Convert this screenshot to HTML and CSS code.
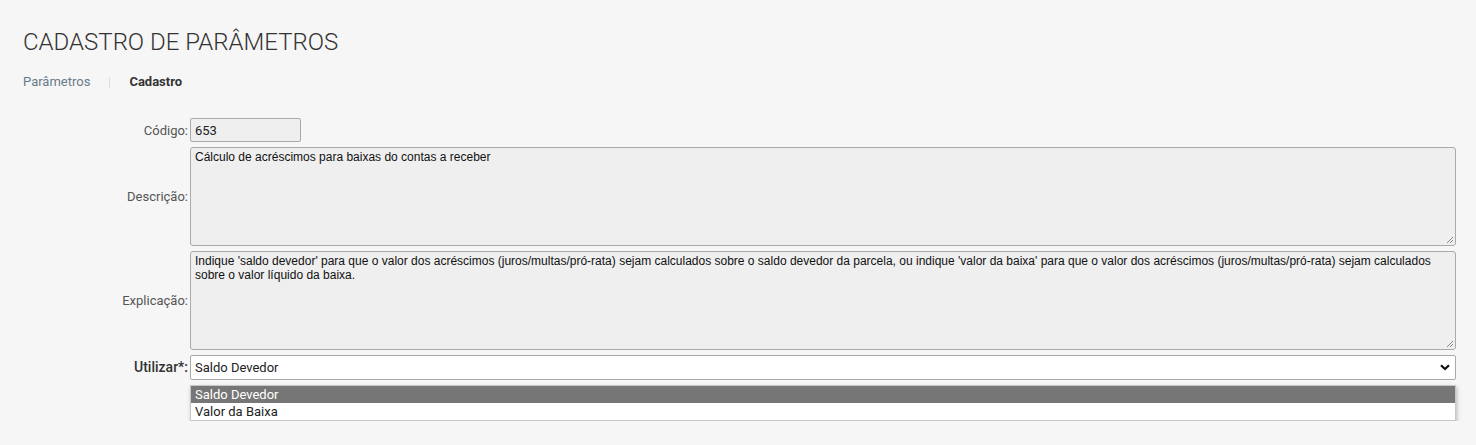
FILE: index.html
```html
<!DOCTYPE html>
<html lang="pt-BR">
<head>
<meta charset="utf-8">
<title>Cadastro de Parâmetros</title>
<link rel="stylesheet" href="styles.css">
</head>
<body>
<div class="page">
  <h1 class="title">CADASTRO DE PARÂMETROS</h1>
  <nav class="crumbs">
    <span class="crumb-link">Parâmetros</span>
    <span class="crumb-sep"></span>
    <span class="crumb-current">Cadastro</span>
  </nav>
  <div class="form">
    <div class="row">
      <span class="label">Código:</span>
      <div class="input code">653</div>
    </div>
    <div class="row">
      <span class="label">Descrição:</span>
      <div class="area">Cálculo de acréscimos para baixas do contas a receber<svg class="grip" width="8" height="8" viewBox="0 0 8 8"><path d="M7 1 L1 7 M7 4 L4 7" stroke="#888" stroke-width="1"/></svg></div>
    </div>
    <div class="row">
      <span class="label">Explicação:</span>
      <div class="area">Indique 'saldo devedor' para que o valor dos acréscimos (juros/multas/pró-rata) sejam calculados sobre o saldo devedor da parcela, ou indique 'valor da baixa' para que o valor dos acréscimos (juros/multas/pró-rata) sejam calculados sobre o valor líquido da baixa.<svg class="grip" width="8" height="8" viewBox="0 0 8 8"><path d="M7 1 L1 7 M7 4 L4 7" stroke="#888" stroke-width="1"/></svg></div>
    </div>
    <div class="row top">
      <span class="label strong">Utilizar*:</span>
      <div class="select-wrap">
        <div class="select">
          <span>Saldo Devedor</span>
          <svg class="chev" width="10" height="7" viewBox="0 0 10 7"><path d="M1 1.2 L5 5 L9 1.2" fill="none" stroke="#111" stroke-width="2.2"/></svg>
        </div>
        <div class="dropdown">
          <div class="opt active">Saldo Devedor</div>
          <div class="opt">Valor da Baixa</div>
        </div>
      </div>
    </div>
  </div>
</div>
</body>
</html>
```
FILE: styles.css
```css
html, body {
  margin: 0;
  padding: 0;
  background: #f6f6f6;
}
body {
  font-family: Roboto, "Liberation Sans", Arial, sans-serif;
  color: #333;
}
.page {
  padding: 27px 20px 0 23px;
}
.title {
  margin: 0;
  font-size: 24px;
  font-weight: 300;
  color: #333;
  line-height: 30px;
}
.crumbs {
  display: flex;
  align-items: center;
  margin-top: 17px;
  font-size: 13px;
  line-height: 16px;
}
.crumb-link {
  color: #6a7a8a;
}
.crumb-sep {
  width: 1px;
  height: 11px;
  background: #ddd;
  margin: 0 19px;
}
.crumb-current {
  font-weight: 700;
  color: #333;
}
.form {
  margin-top: 28px;
  display: flex;
  flex-direction: column;
  gap: 5px;
}
.row {
  display: flex;
  align-items: center;
}
.row.top {
  align-items: flex-start;
}
.label {
  width: 165px;
  text-align: right;
  font-size: 13px;
  color: #555;
  padding-right: 2px;
  flex: none;
}
.label.strong {
  font-size: 14px;
  font-weight: 500;
  color: #333;
  line-height: 25px;
}
.input {
  box-sizing: border-box;
  width: 111px;
  height: 24px;
  line-height: 23px;
  border: 1px solid #a9a9a9;
  border-radius: 2px;
  background: #efefef;
  font-size: 13px;
  color: #222;
  padding: 0 4px;
}
.area {
  position: relative;
  box-sizing: border-box;
  flex: 1;
  height: 99px;
  border: 1px solid #a9a9a9;
  border-radius: 3px;
  background: #efefef;
  font-family: "Liberation Sans", Arial, sans-serif;
  font-size: 12px;
  line-height: 14px;
  color: #111;
  padding: 2px 4px;
  overflow: hidden;
}
.grip {
  position: absolute;
  right: 1px;
  bottom: 1px;
}
.select-wrap {
  flex: 1;
  display: flex;
  flex-direction: column;
  gap: 5px;
}
.select {
  box-sizing: border-box;
  height: 25px;
  border: 1px solid #a9a9a9;
  border-radius: 2px;
  background: #fff;
  display: flex;
  align-items: center;
  justify-content: space-between;
  padding: 0 5px 0 4px;
  font-size: 13px;
  color: #222;
}
.chev {
  display: block;
}
.dropdown {
  background: #fff;
  border: 1px solid #c8c8c8;
  box-shadow: 1px 2px 4px rgba(0, 0, 0, 0.25);
  font-size: 13px;
  color: #222;
}
.opt {
  height: 17px;
  line-height: 17px;
  padding: 0 4px;
}
.opt.active {
  background: #767676;
  color: #fff;
}
```
